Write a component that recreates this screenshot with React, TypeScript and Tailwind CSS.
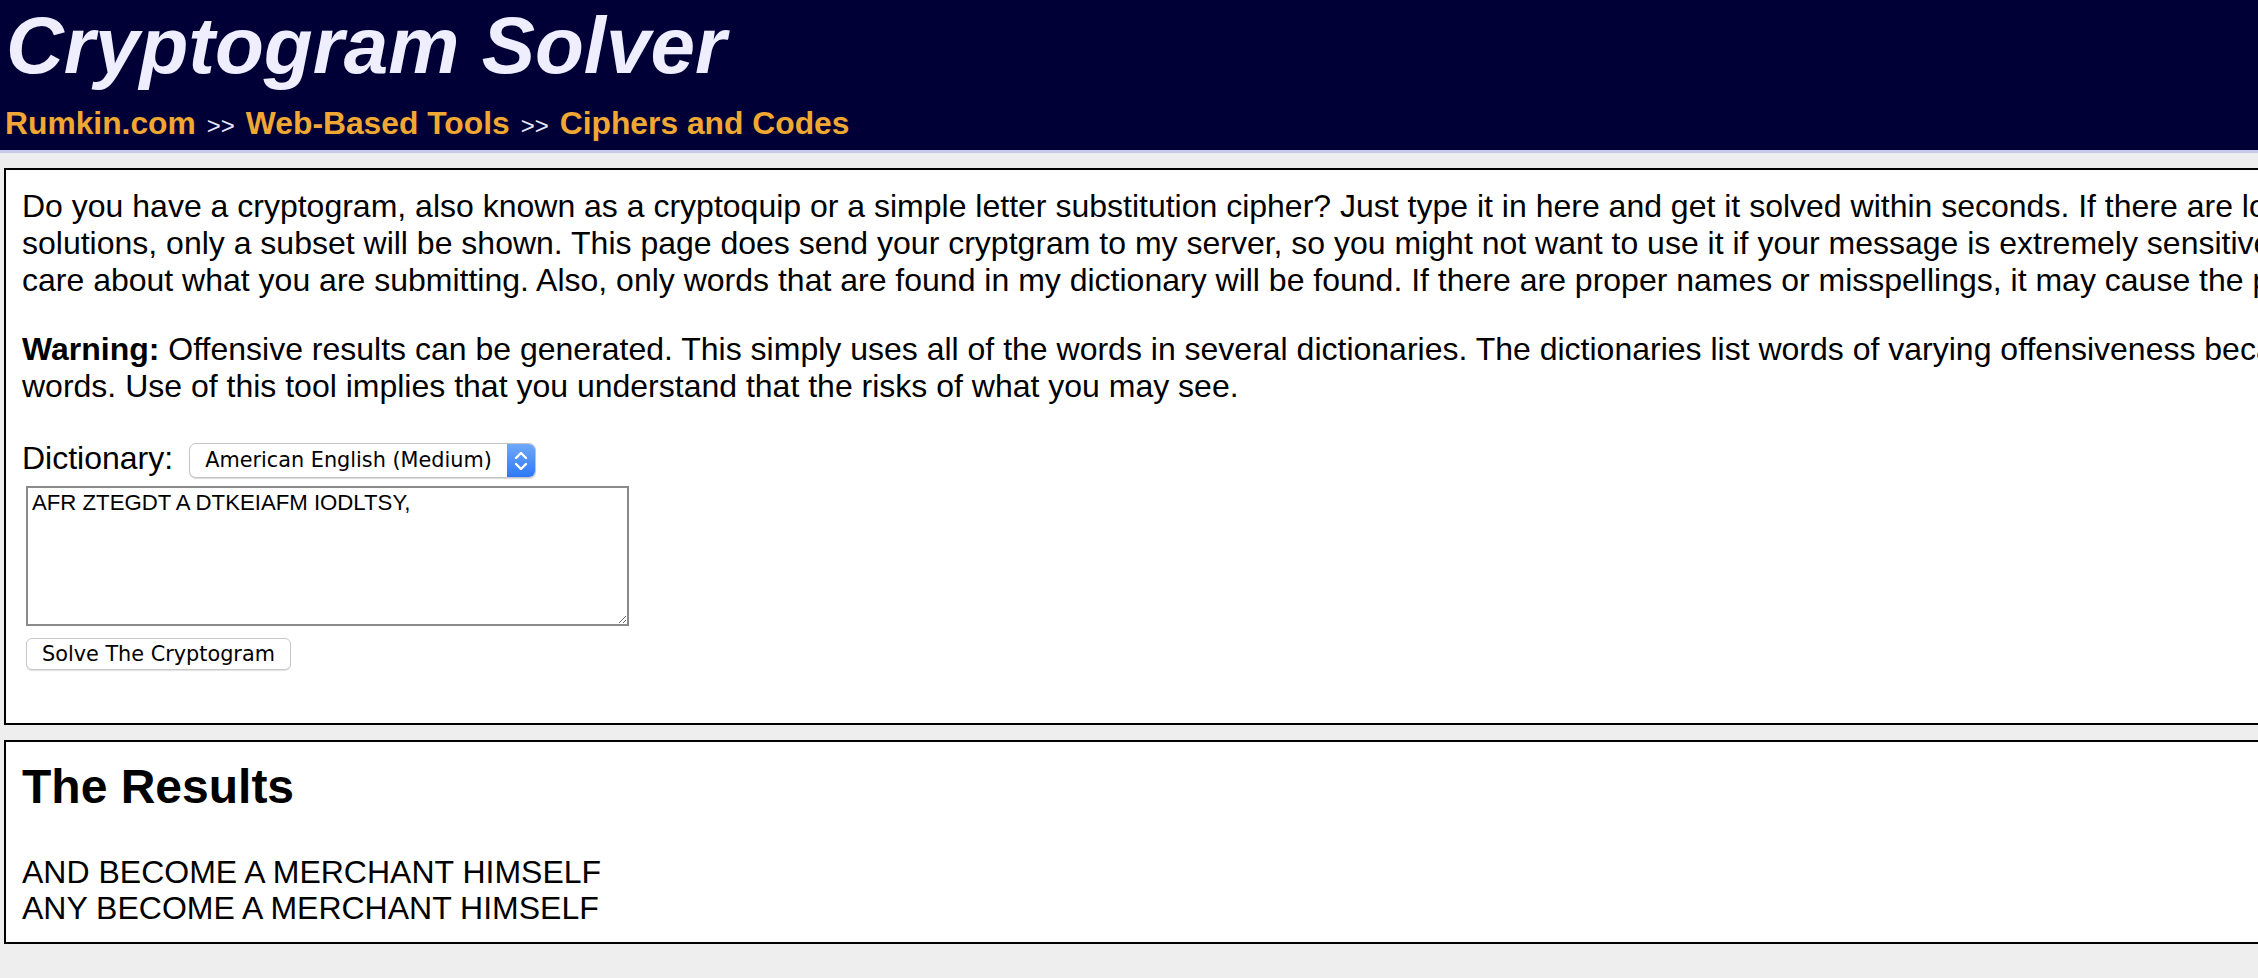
import React from "react";

const sans = "font-['Liberation_Sans',Arial,Helvetica,sans-serif]";
const ui = "font-['DejaVu_Sans','Liberation_Sans',sans-serif]";

function Crumbs() {
  return (
    <div className="flex items-baseline gap-[11px] pl-[5px] mt-[22px] leading-none">
      <a className="text-[31.8px] font-bold text-[#f0a833]">Rumkin.com</a>
      <span className="text-[24px] text-[#e8e8ff]">&gt;&gt;</span>
      <a className="text-[31.8px] font-bold text-[#f0a833]">Web-Based Tools</a>
      <span className="text-[24px] text-[#e8e8ff]">&gt;&gt;</span>
      <a className="text-[31.8px] font-bold text-[#f0a833]">Ciphers and Codes</a>
    </div>
  );
}

function DictionarySelect() {
  return (
    <div className="ml-[16px] mt-[4px] flex h-[35px] w-[347px] items-stretch rounded-[7px] border border-[#c4c4c4] bg-white shadow-[0_1px_1px_rgba(0,0,0,0.15)] overflow-hidden">
      <div className={`${ui} flex-1 flex items-center pl-[15px] text-[20.8px] text-black`}>
        American English (Medium)
      </div>
      <div className="w-[28px] flex items-center justify-center bg-gradient-to-b from-[#6ea8fa] to-[#2c78f5]">
        <svg width="16" height="24" viewBox="0 0 16 24" fill="none" stroke="white" strokeWidth="2.4" strokeLinecap="round" strokeLinejoin="round">
          <path d="M3 9 L8 4 L13 9" />
          <path d="M3 15 L8 20 L13 15" />
        </svg>
      </div>
    </div>
  );
}

export default function App() {
  return (
    <div className={`${sans} w-screen min-h-screen overflow-hidden bg-[#eeeeee] text-black`}>
      <div className="w-[2900px]">
        <header className="h-[150px] bg-[#000037] pt-[6px]">
          <h1 className="pl-[6px] text-[80px] leading-none font-bold italic text-[#eeeeff]">
            Cryptogram Solver
          </h1>
          <Crumbs />
        </header>
        <div className="h-[3px] bg-[#c9c9ec]" />

        <div className="pl-[4px] pt-[15px]">
          <section className="border-2 border-black bg-white pl-[16px] pt-[18px] pb-[53px] text-[32px] leading-[37px]">
            <p className="whitespace-nowrap">
              Do you have a cryptogram, also known as a cryptoquip or a simple letter substitution cipher? Just type it in here and get it solved within seconds. If there are lots of possible
              <br />
              solutions, only a subset will be shown. This page does send your cryptgram to my server, so you might not want to use it if your message is extremely sensitive or if you
              <br />
              care about what you are submitting. Also, only words that are found in my dictionary will be found. If there are proper names or misspellings, it may cause the program to fail.
            </p>
            <p className="mt-[32px] whitespace-nowrap">
              <b>Warning:</b> Offensive results can be generated. This simply uses all of the words in several dictionaries. The dictionaries list words of varying offensiveness because they list
              <br />
              words. Use of this tool implies that you understand that the risks of what you may see.
            </p>

            <div className="mt-[34px] flex items-center">
              <span>Dictionary:</span>
              <DictionarySelect />
            </div>

            <textarea
              readOnly
              defaultValue="AFR ZTEGDT A DTKEIAFM IODLTSY,"
              className="mt-[8px] ml-[4px] block h-[140px] w-[603px] border-2 border-[#8a8a8a] bg-white px-[4px] py-[2px] text-[22.2px] leading-[25px] outline-none"
            />

            <button
              className={`${ui} mt-[12px] ml-[4px] block h-[32px] rounded-[6px] border border-[#c8c8c8] bg-white px-[15px] text-[20.8px] leading-none text-black shadow-[0_1px_1px_rgba(0,0,0,0.12)]`}
            >
              Solve The Cryptogram
            </button>
          </section>

          <section className="mt-[15px] border-2 border-black bg-white pl-[16px] pt-[17px] pb-[16px]">
            <h2 className="text-[48px] leading-[55px] font-bold">The Results</h2>
            <div className="mt-[40px] text-[32px] leading-[36px]">
              <div>AND BECOME A MERCHANT HIMSELF</div>
              <div>ANY BECOME A MERCHANT HIMSELF</div>
            </div>
          </section>
        </div>
      </div>
    </div>
  );
}
